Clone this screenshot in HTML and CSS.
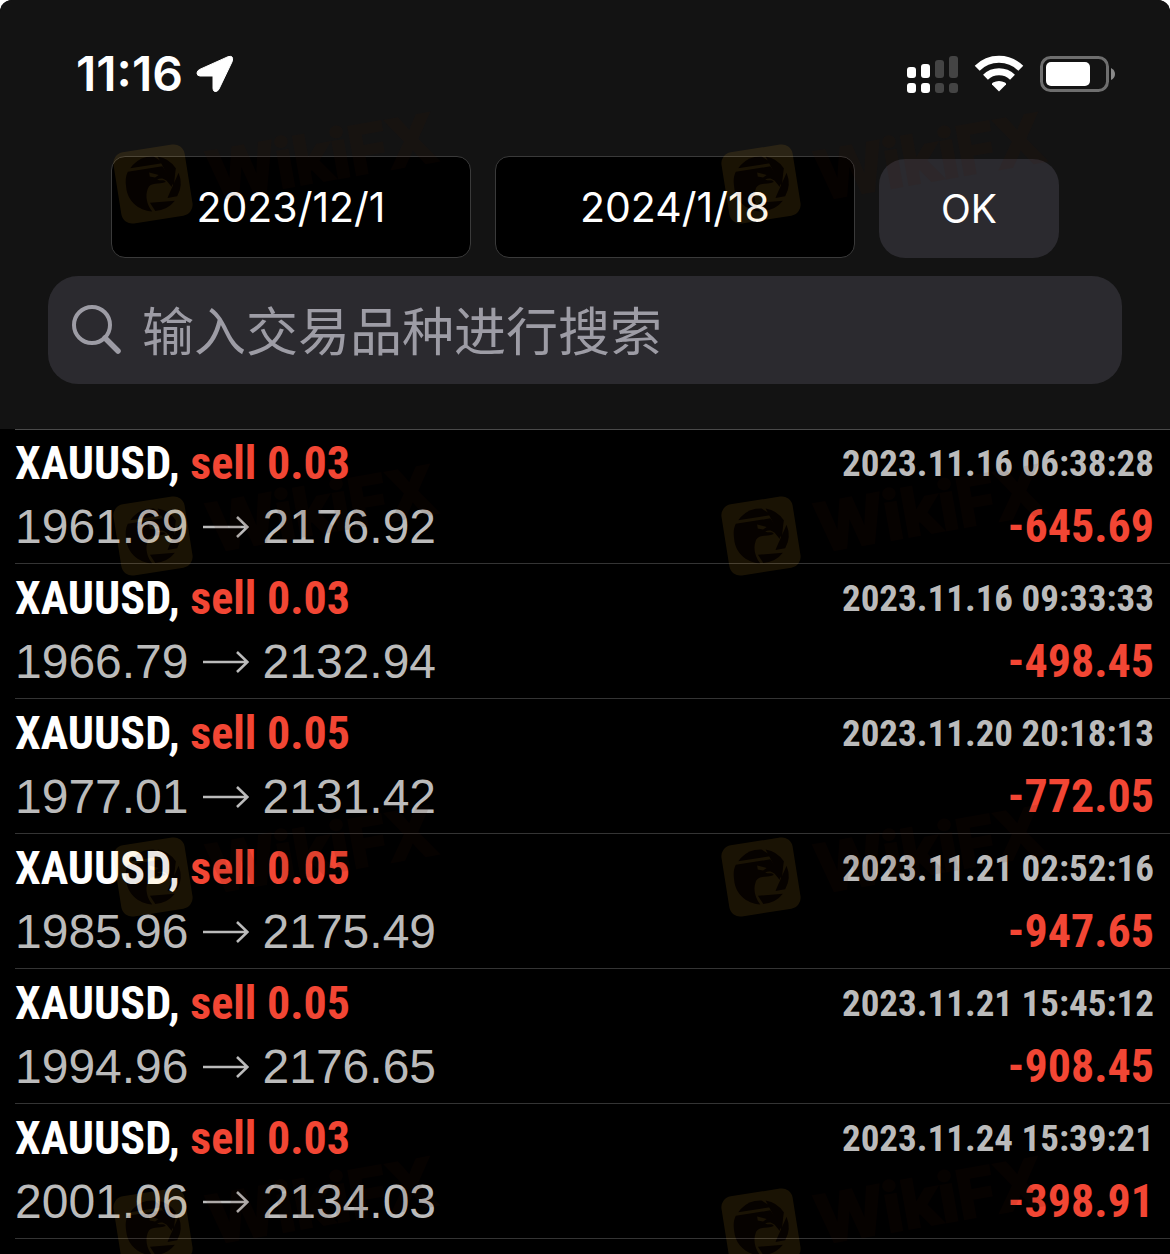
FILE: index.html
```
<!DOCTYPE html>
<html lang="zh-CN">
<head>
<meta charset="UTF-8">
<meta name="viewport" content="width=device-width, initial-scale=1">
<title>History</title>
<link rel="stylesheet" href="styles.css">
</head>

<body>
<!-- shared shapes -->
<svg class="defs" aria-hidden="true">
    <symbol id="arrow" viewBox="0 0 46 28">
        <path d="M0 14H44M34 4L44.500 14L34 24" fill="none" stroke="currentColor" stroke-width="2.600"/>
    </symbol>
    <symbol id="logo" viewBox="0 0 80 80">
        <g transform="rotate(-9 40 40)">
            <rect x="4" y="4" width="72" height="72" rx="11" fill="#ffb828"/>
            <g fill="#401400">
                <path d="M23 18A27 27 0 0 1 45 13L54 21L20 21Z"/>
                <path d="M49 13.500A27 27 0 0 1 65 28L60 46L49 14Z"/>
                <path d="M67 33A27 27 0 0 1 62 56L52 56Z"/>
                <path d="M59 60A27 27 0 0 1 38 67L34 58Z"/>
                <path d="M17 24L52 24L60 40L58 46L54 39C50 35 48 36 45 36C47 39 51 36 53 40C46 42 38 37 34 44C30 51 31 60 35 67C21 64 12 52 13 39C13 33 14 28 17 24ZM38 28L47 32L43 34L38 32Z" fill-rule="evenodd"/>
            </g>
        </g>
    </symbol>
</svg>

<header class="header">
    <div class="status-bar">
        <div class="status-left">
            <span class="clock">11:16</span>
            <svg class="location" viewBox="0 0 36 36" aria-label="Location"><path d="M2.500 13.500L31 .7Q37-1 35.200 5.500L22 33Q20.500 36 18 35.500Q16 35.200 16 32.500V20H3Q0 19.800 0 17.200Q0 14.800 2.500 13.500Z" fill="#fff" stroke="#fff" stroke-width="1"/></svg>
        </div>
        <div class="status-right">
            <svg class="signal" viewBox="0 0 52 38" aria-label="Signal">
                <g fill="#fff">
                    <rect x="1" y="12" width="9" height="11" rx="3"/>
                    <rect x="15" y="9" width="9" height="14" rx="3"/>
                    <rect x="1" y="28" width="9" height="10" rx="3"/>
                    <rect x="15" y="28" width="9" height="10" rx="3"/>
                </g>
                <g fill="#444">
                    <rect x="29" y="5" width="9" height="18" rx="3"/>
                    <rect x="43" y="1" width="9" height="22" rx="3"/>
                    <rect x="29" y="28" width="9" height="10" rx="3"/>
                    <rect x="43" y="28" width="9" height="10" rx="3"/>
                </g>
            </svg>
            <svg class="wifi" viewBox="0 0 50 38" aria-label="Wi-Fi">
                <g fill="none" stroke="#fff" stroke-width="7">
                    <path d="M3.200 13.300A31 31 0 0 1 46.800 13.300"/>
                    <path d="M11.500 22.200A19.500 19.500 0 0 1 38.500 22.200"/>
                </g>
                <path d="M25 36.500L18 29.500Q17.500 28.300 19 27.500Q25 24.500 31 27.500Q32.500 28.300 32 29.500Z" fill="#fff"/>
            </svg>
            <svg class="battery" viewBox="0 0 76 38" aria-label="Battery">
                <rect x="1.500" y="2.500" width="66" height="33" rx="9" fill="none" stroke="#6e6e6e" stroke-width="3"/>
                <rect x="6" y="7" width="44" height="24" rx="5" fill="#fff"/>
                <path d="M71 13Q75 15 75 19T71 25Z" fill="#8a8a8a"/>
            </svg>
        </div>
    </div>

    <form class="filters">
        <div class="date-range">
            <input class="date-box" type="text" aria-label="开始日期" value="2023/12/1">
            <input class="date-box" type="text" aria-label="结束日期" value="2024/1/18">
            <button class="ok-button" type="button">OK</button>
        </div>
        <label class="search">
            <svg class="search-icon" viewBox="0 0 50 50" aria-hidden="true">
                <circle cx="20" cy="20" r="18" fill="none" stroke="#9d9ca5" stroke-width="4"/>
                <path d="M33 33L46 46" stroke="#9d9ca5" stroke-width="5.500" stroke-linecap="round"/>
            </svg>
            <input class="search-box" type="search" aria-label="搜索" placeholder="输入交易品种进行搜索">
        </label>
    </form>
</header>

<ul class="deals">
    <li class="deal">
        <div class="line"><span class="symbol">XAUUSD, <span class="red">sell 0.03</span></span><time class="time">2023.11.16 06:38:28</time></div>
        <div class="line"><span class="prices">1961.69<svg class="arrow"><use href="#arrow"/></svg>2176.92</span><span class="profit red">-645.69</span></div>
    </li>
    <li class="deal">
        <div class="line"><span class="symbol">XAUUSD, <span class="red">sell 0.03</span></span><time class="time">2023.11.16 09:33:33</time></div>
        <div class="line"><span class="prices">1966.79<svg class="arrow"><use href="#arrow"/></svg>2132.94</span><span class="profit red">-498.45</span></div>
    </li>
    <li class="deal">
        <div class="line"><span class="symbol">XAUUSD, <span class="red">sell 0.05</span></span><time class="time">2023.11.20 20:18:13</time></div>
        <div class="line"><span class="prices">1977.01<svg class="arrow"><use href="#arrow"/></svg>2131.42</span><span class="profit red">-772.05</span></div>
    </li>
    <li class="deal">
        <div class="line"><span class="symbol">XAUUSD, <span class="red">sell 0.05</span></span><time class="time">2023.11.21 02:52:16</time></div>
        <div class="line"><span class="prices">1985.96<svg class="arrow"><use href="#arrow"/></svg>2175.49</span><span class="profit red">-947.65</span></div>
    </li>
    <li class="deal">
        <div class="line"><span class="symbol">XAUUSD, <span class="red">sell 0.05</span></span><time class="time">2023.11.21 15:45:12</time></div>
        <div class="line"><span class="prices">1994.96<svg class="arrow"><use href="#arrow"/></svg>2176.65</span><span class="profit red">-908.45</span></div>
    </li>
    <li class="deal">
        <div class="line"><span class="symbol">XAUUSD, <span class="red">sell 0.03</span></span><time class="time">2023.11.24 15:39:21</time></div>
        <div class="line"><span class="prices">2001.06<svg class="arrow"><use href="#arrow"/></svg>2134.03</span><span class="profit red">-398.91</span></div>
    </li>
</ul>

<!-- watermark layer -->
<div class="watermarks" aria-hidden="true">
    <div class="mark"><svg class="mark-logo"><use href="#logo"/></svg><span class="mark-text">WikiFX</span></div>
    <div class="mark"><svg class="mark-logo"><use href="#logo"/></svg><span class="mark-text">WikiFX</span></div>
    <div class="mark"><svg class="mark-logo"><use href="#logo"/></svg><span class="mark-text">WikiFX</span></div>
    <div class="mark"><svg class="mark-logo"><use href="#logo"/></svg><span class="mark-text">WikiFX</span></div>
    <div class="mark"><svg class="mark-logo"><use href="#logo"/></svg><span class="mark-text">WikiFX</span></div>
    <div class="mark"><svg class="mark-logo"><use href="#logo"/></svg><span class="mark-text">WikiFX</span></div>
    <div class="mark"><svg class="mark-logo"><use href="#logo"/></svg><span class="mark-text">WikiFX</span></div>
    <div class="mark"><svg class="mark-logo"><use href="#logo"/></svg><span class="mark-text">WikiFX</span></div>
</div>
</body>
</html>
```
FILE: styles.css
```
* {
    box-sizing: border-box;
}

html {
    background-color: #fff;
}

body {
    position: relative;
    margin: 0;
    min-height: 100vh;
    background-color: #000;
    border-radius: 12px 12px 0 0;
    overflow: hidden;
    font-family: "Liberation Sans", Arial, sans-serif;
    color: #fff;
}

.defs {
    position: absolute;
    width: 0;
    height: 0;
}

/* header */
.header {
    padding: 48px 48px 45px;
    background-color: #131313;
    font-family: Inter, "Noto Sans CJK SC", sans-serif;
}

.status-bar {
    display: flex;
    justify-content: space-between;
    align-items: center;
    height: 52px;
    padding: 0 6px 0 28px;
}

.status-left {
    display: flex;
    align-items: center;
    gap: 14px;
}

.status-right {
    display: flex;
    align-items: center;
    gap: 16px;
}

.clock {
    font-size: 48px;
    font-weight: 600;
    line-height: 52px;
}

.location {
    width: 36px;
    height: 36px;
    overflow: visible;
}

.signal {
    width: 52px;
    height: 38px;
}

.wifi {
    width: 50px;
    height: 38px;
}

.battery {
    width: 76px;
    height: 38px;
}

.filters {
    margin-top: 56px;
}

.date-range {
    display: flex;
    align-items: flex-end;
    gap: 24px;
    padding: 0 63px;
}

.date-box,
.ok-button {
    min-width: 0;
    padding: 0;
    font-family: inherit;
    text-align: center;
    color: #fff;
}

.date-box {
    flex: 2 1 360px;
    height: 102px;
    background-color: #000;
    border: 1px solid #3a3a3a;
    border-radius: 14px;
    font-size: 41px;
}

.ok-button {
    flex: 1 1 180px;
    height: 99px;
    background-color: #2b2a2f;
    border: none;
    border-radius: 26px;
    font-size: 39px;
}

.search {
    display: flex;
    align-items: center;
    gap: 20px;
    height: 108px;
    margin-top: 18px;
    padding: 0 24px;
    background-color: #2b2a2f;
    border-radius: 30px;
}

.search-icon {
    flex: none;
    width: 50px;
    height: 50px;
}

.search-box {
    flex: 1;
    min-width: 0;
    padding: 0 0 4px;
    background: none;
    border: none;
    outline: none;
    font-family: "Noto Sans CJK SC", sans-serif;
    font-size: 52px;
    color: #fff;
}

.search-box::placeholder {
    color: #9d9ca5;
}

/* list of closed deals */
.deals {
    margin: 0 0 0 15px;
    padding: 0;
    border-top: 1px solid #4a4a4a;
    list-style: none;
}

.deal {
    padding: 3px 16px 5px 0;
    border-bottom: 1px solid #343434;
}

.deal:first-child {
    padding-top: 2px;
}

.line {
    display: flex;
    justify-content: space-between;
    align-items: center;
    height: 63px;
    line-height: 63px;
    white-space: nowrap;
}

.symbol,
.time,
.profit {
    font-family: "Roboto Condensed", "Arial Narrow", Roboto, sans-serif;
    font-size: 46px;
    font-weight: bold;
}

.time {
    font-size: 37px;
    color: #bbb;
}

.prices {
    display: flex;
    align-items: center;
    gap: 14px;
    font-size: 48px;
    color: #bbb;
}

.arrow {
    width: 46px;
    height: 28px;
}

.red {
    color: #f24634;
}

/* watermarks */
.watermarks {
    position: absolute;
    top: 144px;
    left: 113px;
    display: grid;
    grid-template-columns: 340px 340px;
    grid-template-rows: 352px 341px 351px 64px;
    column-gap: 268px;
    pointer-events: none;
}

.mark {
    display: flex;
    align-items: flex-start;
    gap: 21px;
    opacity: 0.1;
}

.mark-logo {
    flex: none;
    width: 80px;
    height: 80px;
}

.mark-text {
    font-family: Inter, sans-serif;
    font-size: 66px;
    font-weight: 700;
    line-height: 64px;
    color: #401400;
    -webkit-text-stroke: 3px #401400;
    transform: rotate(-10deg);
    transform-origin: 0 100%;
}
```
